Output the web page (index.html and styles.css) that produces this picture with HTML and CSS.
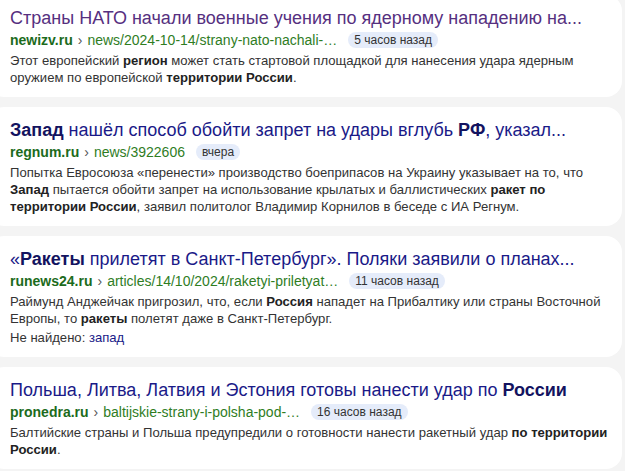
FILE: index.html
```html
<!DOCTYPE html>
<html lang="ru">
<head>
    <meta charset="UTF-8">
    <meta name="viewport" content="width=device-width, initial-scale=1.0">
    <title>Поиск</title>
    <link rel="stylesheet" href="styles.css">
</head>
<body>
    <div class="results">
        <div class="card">
            <a class="title visited" href="#">Страны НАТО начали военные учения по ядерному нападению на...</a>
            <div class="path">
                <span class="domain">newizv.ru</span><span class="sep">›</span><span class="url">news/2024-10-14/strany-nato-nachali-…</span>
                <span class="badge">5 часов назад</span>
            </div>
            <div class="snippet">Этот европейский <b>регион</b> может стать стартовой площадкой для нанесения удара ядерным оружием по европейской <b>территории России</b>.</div>
        </div>

        <div class="card">
            <a class="title" href="#"><b>Запад</b> нашёл способ обойти запрет на удары вглубь <b>РФ</b>, указал...</a>
            <div class="path">
                <span class="domain">regnum.ru</span><span class="sep">›</span><span class="url">news/3922606</span>
                <span class="badge">вчера</span>
            </div>
            <div class="snippet">Попытка Евросоюза «перенести» производство боеприпасов на Украину указывает на то, что <b>Запад</b> пытается обойти запрет на использование крылатых и баллистических <b>ракет по территории России</b>, заявил политолог Владимир Корнилов в беседе с ИА Регнум.</div>
        </div>

        <div class="card">
            <a class="title" href="#">«<b>Ракеты</b> прилетят в Санкт-Петербург». Поляки заявили о планах...</a>
            <div class="path">
                <span class="domain">runews24.ru</span><span class="sep">›</span><span class="url">articles/14/10/2024/raketyi-priletyat…</span>
                <span class="badge">11 часов назад</span>
            </div>
            <div class="snippet">Раймунд Анджейчак пригрозил, что, если <b>Россия</b> нападет на Прибалтику или страны Восточной Европы, то <b>ракеты</b> полетят даже в Санкт-Петербург.</div>
            <div class="missing">Не найдено: <a href="#">запад</a></div>
        </div>

        <div class="card">
            <a class="title" href="#">Польша, Литва, Латвия и Эстония готовы нанести удар по <b>России</b></a>
            <div class="path">
                <span class="domain">pronedra.ru</span><span class="sep">›</span><span class="url">baltijskie-strany-i-polsha-pod-…</span>
                <span class="badge">16 часов назад</span>
            </div>
            <div class="snippet">Балтийские страны и Польша предупредили о готовности нанести ракетный удар <b>по территории России</b>.</div>
        </div>
    </div>
</body>
</html>
```

FILE: styles.css
```css
body{
    margin: 0;
    background-color: #f4f4f4;
    font-family: "Liberation Sans", Arial, sans-serif;
    overflow: hidden;
}
.results{
    display: flex;
    flex-direction: column;
    gap: 10px;
    margin-top: -5px;
    margin-left: -12px;
    width: 634px;
}
.card{
    background-color: #fff;
    border-radius: 16px;
    padding: 11px 10px 11px 22px;
}
.title{
    display: block;
    font-size: 18px;
    line-height: 24px;
    color: #1a1a88;
    text-decoration: none;
    white-space: nowrap;
}
.title b{
    color: #131360;
}
.title.visited{
    color: #56307f;
}
.path{
    display: flex;
    align-items: center;
    font-size: 14px;
    line-height: 18px;
    margin-top: 1px;
}
.domain{
    color: #1c6b1c;
    font-weight: bold;
}
.sep{
    color: #555;
    margin: 0 5px;
}
.url{
    color: #2f7d1f;
}
.badge{
    margin-left: 11px;
    background-color: #e5ecfa;
    color: #333;
    font-size: 12px;
    line-height: 16px;
    padding: 0 6px;
    border-radius: 8px;
}
.snippet{
    font-size: 13.1px;
    line-height: 17px;
    color: #333;
    margin-top: 3px;
}
.snippet b{
    color: #222;
}
.missing{
    font-size: 13.1px;
    line-height: 17px;
    color: #333;
    margin-top: 2px;
}
.missing a{
    color: #1a1a88;
    text-decoration: none;
}
```
